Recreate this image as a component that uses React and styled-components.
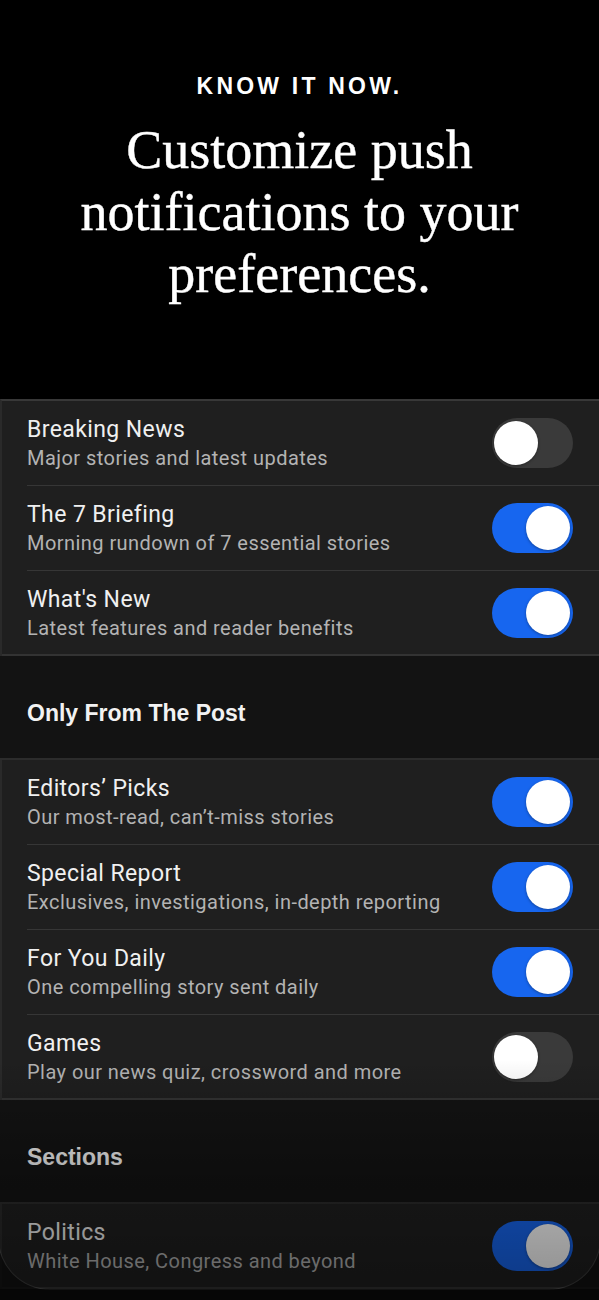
import React from 'react';
import styled, { createGlobalStyle } from 'styled-components';

const GlobalStyle = createGlobalStyle`
  html, body { margin: 0; padding: 0; background: #000; }
  * { box-sizing: border-box; }
`;

const Page = styled.div`
  position: relative;
  width: 599px;
  height: 1300px;
  overflow: hidden;
  background: #000;
  font-family: Roboto, "Liberation Sans", sans-serif;
`;

const Hero = styled.div`
  height: 399px;
  padding-top: 73px;
  display: flex;
  flex-direction: column;
  align-items: center;
  text-align: center;
`;

const Kicker = styled.div`
  font-family: "Liberation Sans", Arial, sans-serif;
  font-weight: bold;
  font-size: 23px;
  letter-spacing: 3.2px;
  color: #fff;
`;

const Headline = styled.h1`
  margin: 19px 0 0;
  font-family: "Liberation Serif", "Times New Roman", serif;
  font-weight: normal;
  font-size: 54px;
  line-height: 62px;
  color: #fff;
  width: 480px;
  -webkit-text-stroke: 0.4px #fff;
`;

const Panel = styled.div`
  background: #1f1f1f;
  border-top: 2px solid #383838;
  border-left: 2px solid #2a2a2a;
`;

const Row = styled.div`
  height: 85px;
  padding-left: 25px;
  display: flex;
  align-items: stretch;
  border-bottom: ${p => (p.$last ? '2px solid #333' : 'none')};
`;

const RowInner = styled.div`
  flex: 1;
  display: flex;
  align-items: center;
  justify-content: space-between;
  padding-right: 26px;
  border-bottom: ${p => (p.$last ? 'none' : '1px solid #363636')};
`;

const Texts = styled.div`
  display: flex;
  flex-direction: column;
  gap: 3px;
`;

const Title = styled.div`
  font-size: 23px;
  letter-spacing: 0.4px;
  color: #f0f0f0;
  line-height: 27px;
`;

const Sub = styled.div`
  font-size: 20px;
  letter-spacing: 0.45px;
  color: #b3b3b3;
  line-height: 24px;
`;

const Track = styled.div`
  position: relative;
  width: 81px;
  height: 50px;
  border-radius: 25px;
  background: ${p => (p.$on ? '#1766ef' : '#3a3a3a')};
  flex-shrink: 0;
`;

const Knob = styled.div`
  position: absolute;
  top: 3px;
  left: ${p => (p.$on ? '34px' : '2px')};
  width: 44px;
  height: 44px;
  border-radius: 50%;
  background: #fff;
  box-shadow: 0 1px 3px rgba(0, 0, 0, 0.35);
`;

const SectionHead = styled.div`
  height: 104px;
  background: #131313;
  margin-left: -2px;
  padding: 12px 0 0 27px;
  display: flex;
  align-items: center;
  font-family: "Liberation Sans", Arial, sans-serif;
  font-weight: bold;
  font-size: 23px;
  color: #f2f2f2;
  border-bottom: 2px solid #2c2c2c;
`;

const BottomFade = styled.div`
  position: absolute;
  left: 0;
  right: 0;
  bottom: 0;
  height: 240px;
  pointer-events: none;
  background: linear-gradient(to bottom, rgba(0, 0, 0, 0) 0%, rgba(0, 0, 0, 0.3) 50%, rgba(0, 0, 0, 0.45) 100%);
`;

const FrameClip = styled.div`
  position: absolute;
  left: 0;
  right: 0;
  bottom: 0;
  height: 90px;
  overflow: hidden;
  pointer-events: none;
`;

const FrameCorner = styled.div`
  position: absolute;
  left: -2px;
  right: -2px;
  top: -20px;
  bottom: 10px;
  border-bottom-left-radius: 52px;
  border-bottom-right-radius: 52px;
  border: 1px solid rgba(255, 255, 255, 0.07);
  border-top: none;
  box-shadow: 0 0 0 80px rgba(8, 8, 8, 0.75);
`;

function Toggle({ on }) {
  return (
    <Track $on={on}>
      <Knob $on={on} />
    </Track>
  );
}

const groups = [
  {
    head: null,
    items: [
      ['Breaking News', 'Major stories and latest updates', false],
      ['The 7 Briefing', 'Morning rundown of 7 essential stories', true],
      ["What's New", 'Latest features and reader benefits', true],
    ],
  },
  {
    head: 'Only From The Post',
    items: [
      ['Editors\u2019 Picks', 'Our most-read, can\u2019t-miss stories', true],
      ['Special Report', 'Exclusives, investigations, in-depth reporting', true],
      ['For You Daily', 'One compelling story sent daily', true],
      ['Games', 'Play our news quiz, crossword and more', false],
    ],
  },
  {
    head: 'Sections',
    items: [['Politics', 'White House, Congress and beyond', true]],
  },
];

export default function App() {
  return (
    <Page>
      <GlobalStyle />
      <Hero>
        <Kicker>KNOW IT NOW.</Kicker>
        <Headline>Customize push notifications to your preferences.</Headline>
      </Hero>
      <Panel>
        {groups.map((g, gi) => (
          <React.Fragment key={gi}>
            {g.head ? <SectionHead>{g.head}</SectionHead> : null}
            {g.items.map((it, i) => {
              const last = i === g.items.length - 1;
              return (
                <Row key={it[0]} $last={last}>
                  <RowInner $last={last}>
                    <Texts>
                      <Title>{it[0]}</Title>
                      <Sub>{it[1]}</Sub>
                    </Texts>
                    <Toggle on={it[2]} />
                  </RowInner>
                </Row>
              );
            })}
          </React.Fragment>
        ))}
      </Panel>
      <BottomFade />
      <FrameClip>
        <FrameCorner />
      </FrameClip>
    </Page>
  );
}
